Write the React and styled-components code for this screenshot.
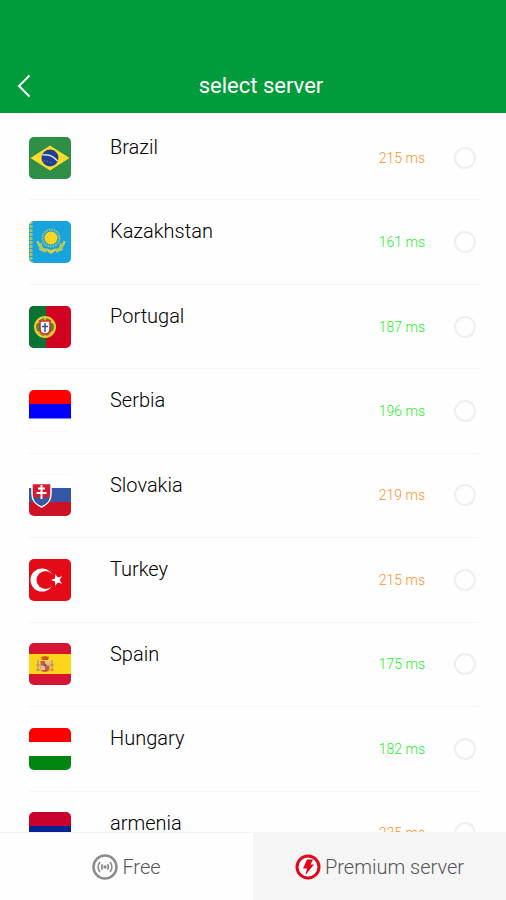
import React, { useState } from 'react';
import styled, { createGlobalStyle } from 'styled-components';

const GlobalStyle = createGlobalStyle`
  * {
    box-sizing: border-box;
  }
  body {
    margin: 0;
    font-family: Roboto, "Liberation Sans", sans-serif;
    background-color: #fefefe;
  }
`;

const AppContainer = styled.div`
  display: flex;
  flex-direction: column;
  height: 100vh;
`;

const Header = styled.header`
  display: grid;
  grid-template-columns: 48px 1fr 48px;
  align-items: center;
  padding: 58px 0 0;
  background-color: #009b3a;
  color: white;
`;

const BackButton = styled.button`
  display: flex;
  align-items: center;
  justify-content: center;
  height: 55px;
  padding: 0;
  border: none;
  background: none;
  color: inherit;
  cursor: pointer;
`;

const Title = styled.h1`
  margin: 0 0 0 16px;
  font-size: 22px;
  line-height: 28px;
  font-weight: 400;
  text-align: center;
`;

const MainContent = styled.main`
  flex: 1;
  min-height: 0;
  padding: 3px 27px 0 29px;
  overflow-y: auto;
  scrollbar-width: none;
`;

const ServerList = styled.ul`
  display: grid;
  grid-auto-rows: 1fr;
  min-height: 760px;
  margin: 0;
  padding: 0;
  list-style: none;
`;

const ServerItem = styled.li`
  border-bottom: 1px solid #f5f5f5;
`;

const ServerLabel = styled.label`
  display: flex;
  align-items: center;
  height: 100%;
  padding-right: 3px;
  cursor: pointer;
`;

const FlagIcon = styled.svg`
  flex: none;
  width: 42px;
  height: 42px;
  border-radius: 5px;
`;

const ServerName = styled.span`
  flex: 1;
  align-self: flex-start;
  margin: 19px 0 0 39px;
  font-size: 20px;
  line-height: 24px;
  font-weight: 300;
  color: #000;
`;

const Ping = styled.span`
  margin-right: 29px;
  font-size: 14px;
  line-height: 20px;
  font-weight: 300;
  color: ${(props) => (props.$slow ? '#ff9228' : '#1ff02a')};
`;

const Radio = styled.input`
  flex: none;
  appearance: none;
  width: 22px;
  height: 22px;
  margin: 0;
  border: 2px solid #efefef;
  border-radius: 50%;
  cursor: pointer;
  &:checked {
    border: 6px solid #009b3a;
  }
`;

const TabBar = styled.nav`
  display: grid;
  grid-template-columns: 1fr 1fr;
  height: 68px;
`;

const Tab = styled.button`
  display: flex;
  align-items: center;
  justify-content: center;
  gap: 4px;
  padding: 0;
  border: none;
  border-top: 1px solid ${(props) => (props.$active ? '#f5f5f5' : '#f3f3f3')};
  background-color: ${(props) => (props.$active ? '#f5f5f5' : '#fefefe')};
  color: #555;
  font-family: inherit;
  font-size: 20px;
  line-height: 24px;
  font-weight: 300;
  cursor: pointer;
`;

const Brazil = () => (
  <>
    <path fill="#2f8f46" d="M0 0h42v42H0z" />
    <path fill="#fddc2c" d="M1.500 21 21 8.500 40.500 21 21 33.500z" />
    <circle cx="21" cy="21" r="8.500" fill="#20408f" />
    <path fill="none" stroke="#d5e0ee" strokeWidth="1.500" d="M13.500 18c5-1 11 1 15 6" />
    <path fill="none" stroke="#7795bf" strokeWidth="1" strokeDasharray="1 2" d="M15 24c4 0 7 1 9 3" />
  </>
);

const Kazakhstan = () => (
  <>
    <path fill="#17a3dc" d="M0 0h42v42H0z" />
    <path fill="none" stroke="#a5c45f" strokeWidth="3" strokeDasharray="3 1" d="M2 0v42" />
    <circle cx="22" cy="17" r="8.500" fill="none" stroke="#a9c86a" strokeWidth="2" strokeDasharray="1.500 1" />
    <circle cx="22" cy="17" r="6.500" fill="#fcd51e" />
    <path fill="none" stroke="#b9c95a" strokeWidth="2.500" d="M8.500 20c1 5 4 8 9 10M35.500 20c-1 5-4 8-9 10" />
    <path fill="none" stroke="#b9c95a" strokeWidth="1.500" d="M12 22l1 5M32 22l-1 5M10 28l7 3M34 28l-7 3" />
    <path fill="#d5d044" d="M16 27l6 2 6-2-3 4-3 2-3-2z" />
  </>
);

const Portugal = () => (
  <>
    <path fill="#d0021f" d="M0 0h42v42H0z" />
    <path fill="#087333" d="M0 0h17v42H0z" />
    <circle cx="16" cy="21" r="10" fill="#6d7f26" stroke="#e2cf36" strokeWidth="2" />
    <path fill="none" stroke="#e2cf36" strokeWidth="1.500" d="M7 17c6-3 12-3 18 0M7 25c6 4 12 4 18 0M16 11v20" />
    <path fill="#fff" stroke="#d3222d" strokeWidth="1.500" d="M11 15h10v8c0 3-2 5-5 5s-5-2-5-5z" />
    <path stroke="#32518f" strokeWidth="1.500" d="M16 17v9M13 20.500h6" />
  </>
);

const Serbia = () => (
  <>
    <path fill="#fff" d="M0 0h42v42H0z" />
    <path fill="#f00" d="M0 0h42v14H0z" />
    <path fill="#0000fb" d="M0 14h42v14.500H0z" />
    <path stroke="#f7f7f7" d="M3 41.500h36" />
  </>
);

const Slovakia = () => (
  <>
    <path fill="#fff" d="M0 0h42v42H0z" />
    <path stroke="#f7f7f7" d="M3 .5h36" />
    <path fill="#3457a6" d="M0 14h42v14H0z" />
    <path fill="#ce1225" d="M0 28h42v14H0z" />
    <path fill="#d51a2f" stroke="#fff" strokeWidth="1.500" d="M3 9.500h19V20c0 7-4 10-9.500 13C7 30 3 27 3 20z" />
    <path fill="#3457a6" d="M4.500 25c2-3 4-2 5 0 1-4 5-4 6 0 1-2 3-3 5 0-2 4-4 5-8 7-4-2-6-3-8-7z" />
    <path stroke="#fff" strokeWidth="2" d="M12.500 11v14M9 14.500h7M7.500 19h10" />
  </>
);

const Turkey = () => (
  <>
    <path fill="#e50a17" d="M0 0h42v42H0z" />
    <circle cx="13" cy="21" r="11.500" fill="#fff" />
    <circle cx="16.500" cy="21" r="9" fill="#e50a17" />
    <path fill="#fff" d="m22 21 4-1.500.1-4.500 2.800 3.500 4.100-1.300-2.400 3.800 2.400 3.800-4.100-1.300-2.800 3.500-.1-4.500z" />
  </>
);

const Spain = () => (
  <>
    <path fill="#d51532" d="M0 0h42v42H0z" />
    <path fill="#ffd51c" d="M0 11h42v20H0z" />
    <path fill="none" stroke="#c9a97c" strokeWidth="2" d="M9 17v11M23 17v11" />
    <path fill="#c95625" d="M12 14l4-1 4 1-1 3h-6z" />
    <path fill="#cf5a3c" d="M11.500 18h9v7c0 3-2 4-4.500 4s-4.500-1-4.500-4z" />
    <path fill="#dcc3a5" d="M16 18h4.500v4.500H16zM11.500 22.500H16V27h-4z" />
    <path fill="none" stroke="#b9854c" strokeWidth="1" d="M7 22h4M21 22h4M7 27h4M21 27h4" />
    <circle cx="16" cy="22" r="1.500" fill="#77557a" />
  </>
);

const Hungary = () => (
  <>
    <path fill="#fff" d="M0 0h42v42H0z" />
    <path fill="#f00" d="M0 0h42v14H0z" />
    <path fill="#008610" d="M0 28h42v14H0z" />
  </>
);

const Armenia = () => (
  <>
    <path fill="#c9002b" d="M0 0h42v14H0z" />
    <path fill="#002395" d="M0 14h42v14H0z" />
    <path fill="#f2a800" d="M0 28h42v14H0z" />
  </>
);

const servers = [
  { name: 'Brazil', ping: 215, Flag: Brazil },
  { name: 'Kazakhstan', ping: 161, Flag: Kazakhstan },
  { name: 'Portugal', ping: 187, Flag: Portugal },
  { name: 'Serbia', ping: 196, Flag: Serbia },
  { name: 'Slovakia', ping: 219, Flag: Slovakia },
  { name: 'Turkey', ping: 215, Flag: Turkey },
  { name: 'Spain', ping: 175, Flag: Spain },
  { name: 'Hungary', ping: 182, Flag: Hungary },
  { name: 'armenia', ping: 235, Flag: Armenia }
];

const BackIcon = () => (
  <svg width="14" height="24" viewBox="0 0 14 24" fill="none" stroke="currentColor" strokeWidth="2" aria-hidden="true">
    <path d="M12.500 1.500 2 12l10.500 10.500" />
  </svg>
);

const FreeIcon = () => (
  <svg width="26" height="26" viewBox="0 0 26 26" fill="none" stroke="#8c8c8c" aria-hidden="true">
    <circle cx="13" cy="13" r="11.500" strokeWidth="2.500" />
    <circle cx="13" cy="13" r="1.800" fill="#8c8c8c" stroke="none" />
    <path strokeWidth="1.600" d="M10.500 10.200c-1.200 1.800-1.200 3.800 0 5.600M15.500 10.200c1.200 1.800 1.200 3.800 0 5.600M8 8c-2.300 3-2.300 7 0 10M18 8c2.300 3 2.300 7 0 10" />
  </svg>
);

const PremiumIcon = () => (
  <svg width="26" height="26" viewBox="0 0 26 26" aria-hidden="true">
    <circle cx="13" cy="13" r="11" fill="#fff" stroke="#e3051b" strokeWidth="3" />
    <path fill="#e3051b" d="M12 5.500h6l-2.500 5H19L10.500 21l1.500-6.500H8z" />
  </svg>
);

const App = () => {
  const [selected, setSelected] = useState('');
  const [tab, setTab] = useState('premium');

  return (
    <AppContainer>
      <GlobalStyle />
      <Header>
        <BackButton type="button" aria-label="Back">
          <BackIcon />
        </BackButton>
        <Title>select server</Title>
      </Header>
      <MainContent>
        <ServerList>
          {servers.map(({ name, ping, Flag }) => (
            <ServerItem key={name}>
              <ServerLabel htmlFor={name}>
                <FlagIcon viewBox="0 0 42 42" aria-hidden="true">
                  <Flag />
                </FlagIcon>
                <ServerName>{name}</ServerName>
                <Ping $slow={ping > 200}>{ping} ms</Ping>
                <Radio
                  type="radio"
                  id={name}
                  name="server"
                  value={name}
                  checked={selected === name}
                  onChange={(event) => setSelected(event.target.value)}
                />
              </ServerLabel>
            </ServerItem>
          ))}
        </ServerList>
      </MainContent>
      <TabBar>
        <Tab type="button" $active={tab === 'free'} onClick={() => setTab('free')}>
          <FreeIcon />
          Free
        </Tab>
        <Tab type="button" $active={tab === 'premium'} onClick={() => setTab('premium')}>
          <PremiumIcon />
          Premium server
        </Tab>
      </TabBar>
    </AppContainer>
  );
};

export default App;
